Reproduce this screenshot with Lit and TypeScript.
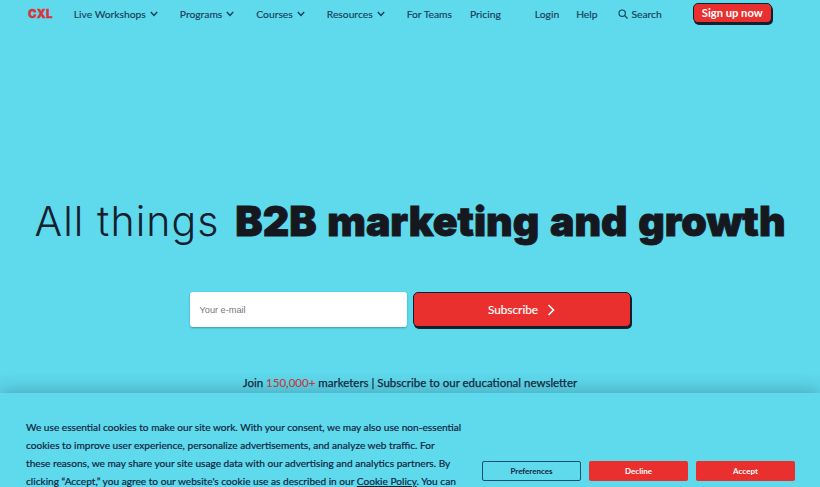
import { LitElement, html, css } from 'lit';
import { customElement } from 'lit/decorators.js';

const chevron = html`<svg class="chev" viewBox="0 0 8 6" width="8" height="6" fill="none" stroke="currentColor" stroke-width="1.4"><path d="M.8 1l3.2 3.4L7.2 1"/></svg>`;

@customElement('app-root')
export class AppRoot extends LitElement {
  static styles = css`
    :host {
      display: block;
      position: relative;
      width: 820px;
      height: 487px;
      overflow: hidden;
      background: #5fd9ec;
      font-family: Lato, sans-serif;
      color: #12263f;
    }

    nav {
      display: flex;
      align-items: center;
      height: 28px;
      padding-left: 28px;
      font-size: 10.3px;
      color: #17405a;
      -webkit-text-stroke: 0.15px #17405a;
    }

    .logo {
      font-family: 'Inter', sans-serif;
      font-weight: 900;
      font-size: 11.5px;
      color: #dc3338;
      margin-right: 21px;
      letter-spacing: 0.3px;
      -webkit-text-stroke: 0.3px #dc3338;
    }

    nav a {
      display: flex;
      align-items: center;
      gap: 4px;
      margin-right: 22px;
      white-space: nowrap;
    }

    nav a.tight { margin-right: 18px; }
    nav a.pricing { margin-right: 34px; }
    nav a.login { margin-right: 17px; }
    nav a.help { margin-right: 21px; }
    nav a.search { margin-right: 31px; gap: 3px; }

    .signup {
      box-sizing: border-box;
      width: 79px;
      height: 20px;
      margin-top: -2px;
      border: 1px solid #12202e;
      border-radius: 5px;
      box-shadow: 1px 2px 0 #12202e;
      background: #e9302f;
      color: #fff;
      font-weight: 700;
      font-size: 11.2px;
      text-align: center;
      line-height: 17px;
      -webkit-text-stroke: 0;
    }

    main {
      display: flex;
      flex-direction: column;
      align-items: center;
    }

    h1 {
      margin: 168px 0 0;
      font-size: 41px;
      line-height: 50px;
      font-weight: 300;
      letter-spacing: 1.1px;
      color: #14202e;
      white-space: nowrap;
      font-family: 'Inter', sans-serif;
    }

    h1 b {
      font-weight: 900;
      margin-left: 3px;
      letter-spacing: 0;
      word-spacing: 2.5px;
      color: #15181f;
      -webkit-text-stroke: 0.9px #15181f;
    }

    form {
      display: flex;
      gap: 6px;
      margin-top: 46px;
    }

    .email {
      box-sizing: border-box;
      width: 217px;
      height: 35px;
      padding-left: 10px;
      display: flex;
      align-items: center;
      background: #fff;
      border-radius: 3px;
      box-shadow: 0 1px 2px rgba(0, 0, 0, 0.3);
      font-family: 'Liberation Sans', sans-serif;
      font-size: 9.2px;
      color: #777;
    }

    .subscribe {
      box-sizing: border-box;
      width: 218px;
      height: 35px;
      display: flex;
      align-items: center;
      justify-content: center;
      gap: 9px;
      background: #e9302f;
      border: 1px solid #12202e;
      border-radius: 5px;
      box-shadow: 1px 2px 0 #12202e;
      color: #fff;
      font-size: 11.8px;
      -webkit-text-stroke: 0.15px #fff;
    }

    .join {
      margin-top: 49px;
      font-size: 11.5px;
      color: #14283c;
      -webkit-text-stroke: 0.25px #14283c;
    }

    .join span {
      color: #cc3a3c;
      -webkit-text-stroke: 0.15px #cc3a3c;
    }

    .cookie {
      position: absolute;
      left: 0;
      right: 0;
      top: 393px;
      height: 94px;
      display: flex;
      background: #5fd9ec;
      box-shadow: 0 -3px 16px rgba(20, 60, 80, 0.3);
    }

    .cookie p {
      width: 434px;
      margin: 25px 0 0 26px;
      font-size: 10.15px;
      line-height: 18px;
      white-space: nowrap;
      color: #12263f;
      -webkit-text-stroke: 0.2px #12263f;
    }

    .cookie u { text-underline-offset: 1px; }

    .actions {
      display: flex;
      gap: 8px;
      margin: 68px 0 0 22px;
    }

    .actions div {
      box-sizing: border-box;
      width: 99px;
      height: 20px;
      border-radius: 2px;
      text-align: center;
      font-size: 8px;
      font-weight: 700;
      line-height: 20px;
      background: #e9302f;
      color: #fff;
    }

    .actions .prefs {
      background: transparent;
      border: 1px solid #14506e;
      color: #12263f;
      line-height: 18px;
    }
  `;

  render() {
    return html`
      <nav>
        <span class="logo">CXL</span>
        <a>Live Workshops ${chevron}</a>
        <a>Programs ${chevron}</a>
        <a>Courses ${chevron}</a>
        <a>Resources ${chevron}</a>
        <a class="tight">For Teams</a>
        <a class="pricing">Pricing</a>
        <a class="login">Login</a>
        <a class="help">Help</a>
        <a class="search">
          <svg viewBox="0 0 12 12" width="10" height="10" fill="none" stroke="currentColor" stroke-width="1.4"><circle cx="5" cy="5" r="3.8"/><path d="M8 8l3.4 3.4"/></svg>
          Search
        </a>
        <div class="signup">Sign up now</div>
      </nav>
      <main>
        <h1>All things <b>B2B marketing and growth</b></h1>
        <form>
          <div class="email">Your e-mail</div>
          <div class="subscribe">
            Subscribe
            <svg viewBox="0 0 8 12" width="8" height="12" fill="none" stroke="#fff" stroke-width="1.6"><path d="M1.5 1l5 5-5 5"/></svg>
          </div>
        </form>
        <div class="join">Join <span>150,000+</span> marketers | Subscribe to our educational newsletter</div>
      </main>
      <section class="cookie">
        <p>We use essential cookies to make our site work. With your consent, we may also use non-essential<br>cookies to improve user experience, personalize advertisements, and analyze web traffic. For<br>these reasons, we may share your site usage data with our advertising and analytics partners. By<br>clicking “Accept,” you agree to our website's cookie use as described in our <u>Cookie Policy</u>. You can</p>
        <div class="actions">
          <div class="prefs">Preferences</div>
          <div>Decline</div>
          <div>Accept</div>
        </div>
      </section>
    `;
  }
}
